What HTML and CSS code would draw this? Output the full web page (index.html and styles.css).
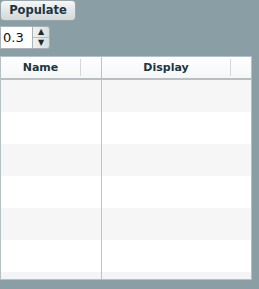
FILE: index.html
```html
<!DOCTYPE html>
<html lang="en">
<head>
<meta charset="UTF-8">
<title>Populate</title>
<link rel="stylesheet" href="styles.css">
</head>
<body>
    <!-- Toolbar -->
    <div class="toolbar">
        <button class="btn">Populate</button>
        <div class="spinner">
            <div class="spinner-field">0.3</div>
            <div class="spinner-buttons">
                <span class="spin-up">&#9650;</span>
                <span class="spin-down">&#9660;</span>
            </div>
        </div>
    </div>

    <!-- Grid -->
    <div class="grid">
        <div class="grid-header">
            <div class="col col-name"><span class="head-label">Name</span><span class="head-tail"></span></div>
            <div class="col col-display"><span class="head-label">Display</span><span class="head-tail"></span></div>
        </div>
        <div class="grid-body">
            <div class="row alt"><div class="cell col-name"></div><div class="cell col-display"></div></div>
            <div class="row"><div class="cell col-name"></div><div class="cell col-display"></div></div>
            <div class="row alt"><div class="cell col-name"></div><div class="cell col-display"></div></div>
            <div class="row"><div class="cell col-name"></div><div class="cell col-display"></div></div>
            <div class="row alt"><div class="cell col-name"></div><div class="cell col-display"></div></div>
            <div class="row"><div class="cell col-name"></div><div class="cell col-display"></div></div>
            <div class="row alt last"><div class="cell col-name"></div><div class="cell col-display"></div></div>
        </div>
    </div>
</body>
</html>
```
FILE: styles.css
```css
/* General Reset */
* {
    margin: 0;
    padding: 0;
    box-sizing: border-box;
}

body {
    width: 259px;
    height: 289px;
    background-color: #8a9ea6;
    font-family: "DejaVu Sans", Verdana, sans-serif;
    overflow: hidden;
}

/* Toolbar */
.toolbar {
    display: flex;
    flex-direction: column;
    align-items: flex-start;
    gap: 5px;
}

.btn {
    width: 76px;
    height: 21px;
    font-family: "DejaVu Sans", Verdana, sans-serif;
    font-size: 11.5px;
    font-weight: bold;
    color: #1d3541;
    background: linear-gradient(#f6f7f7, #dfe3e3 60%, #d3d8d8);
    border: 1px solid #98a6ab;
    border-radius: 4px;
    padding-bottom: 1px;
}

.spinner {
    display: flex;
    height: 23px;
}

.spinner-field {
    width: 33px;
    height: 23px;
    background-color: #ffffff;
    border: 1px solid #a9b5b9;
    font-size: 13px;
    line-height: 21px;
    padding-left: 2px;
    color: #111;
}

.spinner-buttons {
    display: flex;
    flex-direction: column;
    width: 17px;
    height: 23px;
    background: linear-gradient(90deg, #f0f2f2, #d9dede);
    border: 1px solid #a4b0b4;
    border-left: none;
    border-radius: 0 3px 3px 0;
}

.spinner-buttons span {
    flex: 1;
    font-size: 8px;
    line-height: 10px;
    text-align: center;
    color: #1a2b33;
}

.spin-up {
    border-bottom: 1px solid #b7c1c4;
}

/* Grid */
.grid {
    margin-top: 7px;
    width: 252px;
    height: 224px;
    background-color: #ffffff;
    border: 1px solid #b5c0c4;
    display: flex;
    flex-direction: column;
}

.grid-header {
    display: flex;
    height: 23px;
    background: linear-gradient(#ffffff, #f5f6f6);
    border-bottom: 2px solid #b8bfc2;
}

.col {
    display: flex;
    align-items: center;
}

.col-name {
    width: 101px;
    border-right: 1px solid #bcc4c7;
}

.col-display {
    flex: 1;
}

.head-label {
    flex: 1;
    text-align: center;
    font-size: 11px;
    font-weight: bold;
    color: #1d3541;
    border-right: 1px solid #d3d8da;
    line-height: 17px;
}

.head-tail {
    width: 20px;
}

.grid-body {
    flex: 1;
    display: flex;
    flex-direction: column;
    overflow: hidden;
}

.row {
    display: flex;
    height: 32px;
    flex-shrink: 0;
    background-color: #ffffff;
}

.row.alt {
    background-color: #f6f6f6;
}

.row.last {
    background: linear-gradient(#f4f5f6, #eef0f2);
}

.cell {
    height: 100%;
}
```
